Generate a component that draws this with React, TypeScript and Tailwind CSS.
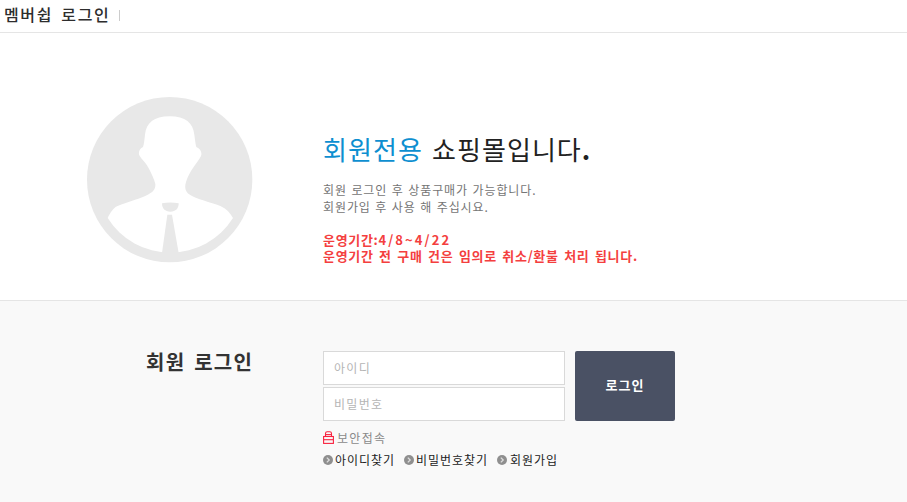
const font = { fontFamily: '"Noto Sans CJK KR", "Liberation Sans", sans-serif' };

function Avatar() {
  return (
    <svg width="166" height="166" viewBox="50 37 498 498" className="block shrink-0">
      <circle cx="298" cy="285" r="248" fill="#e8e8e8" />
      <path
        fill="#fff"
        d="M298 95 C250 95 228 115 224 150 C222 165 222 175 218 187 C208 192 202 203 208 214 C216 226 228 236 236 252 C244 268 252 285 255 298 C256 312 250 320 236 328 C212 342 175 350 140 365 C128 371 120 385 112 400 A222 222 0 0 0 488 400 C480 385 468 372 450 364 C420 352 380 345 355 328 C345 320 342 308 347 292 C352 276 360 262 368 250 C376 238 386 226 392 214 C396 203 390 192 378 187 C375 175 374 165 372 150 C368 115 346 95 298 95 Z"
      />
      <path fill="#e8e8e8" d="M275 356 Q300 351 325 356 C325 372 316 381 300 381 C284 381 275 372 275 356 Z" />
      <path fill="#e8e8e8" d="M291 390 L305 390 L325 505 L275 505 Z" />
    </svg>
  );
}

function Bullet() {
  return (
    <svg width="10" height="10" viewBox="0 0 10 10" className="shrink-0">
      <circle cx="5" cy="5" r="5" fill="#8f8f8f" />
      <path d="M3.8 2.6 L6.2 5 L3.8 7.4" fill="none" stroke="#dddddd" strokeWidth="1.3" />
    </svg>
  );
}

function Lock() {
  return (
    <svg width="11" height="13" viewBox="0 0 11 13" className="shrink-0 -mt-[2px]">
      <path d="M2.5 5 V2.5 Q2.5 .7 4.2 .7 H6.8 Q8.5 .7 8.5 2.5 V5" fill="none" stroke="#f8223f" strokeWidth="1.1" />
      <rect x=".6" y="5.5" width="9.8" height="6.9" fill="none" stroke="#f8223f" strokeWidth="1.1" />
      <path d="M1 8.7 H10" stroke="#f8223f" strokeWidth="1.1" />
      <path d="M2.5 3.6 H8.5" stroke="#f8223f" strokeWidth="1.1" />
    </svg>
  );
}

export default function App() {
  return (
    <div className="w-[907px] h-[502px] overflow-hidden bg-white tracking-[0.08em] [word-spacing:0.12em]" style={font}>
      <header className="h-[33px] border-b border-[#e5e5e5] flex items-center pl-1">
        <h1 className="text-[16px] leading-[28px] font-medium text-[#2d2d2d] -mt-[4px] tracking-[0.1em] [word-spacing:0.2em]">멤버쉽 로그인</h1>
        <span className="ml-[9px] w-px h-[11px] bg-[#cccccc] -mt-[2px]" />
      </header>

      <section className="h-[268px] border-b border-[#e5e5e5] flex">
        <div className="pl-[87px] pt-[64px]">
          <Avatar />
        </div>
        <div className="pl-[70px] pt-[96px]">
          <p className="text-[26px] leading-[40px] text-[#222222] tracking-[0.04em] [word-spacing:0.09em]">
            <span className="text-[#0e8fd0]">회원전용</span> 쇼핑몰입니다<span className="font-bold">.</span>
          </p>
          <p className="mt-[13px] text-[12px] leading-[16.5px] text-[#757575] tracking-[0.075em] [word-spacing:0.08em]">
            회원 로그인 후 상품구매가 가능합니다.
            <br />
            회원가입 후 사용 해 주십시요.
          </p>
          <p className="mt-[17px] text-[13px] leading-[16px] font-bold text-[#f43f3f] tracking-[0.052em]">
            운영기간:<span className="tracking-[0.16em]">4/8~4/22</span>
            <br />
            운영기간 전 구매 건은 임의로 취소/환불 처리 됩니다.
          </p>
        </div>
      </section>

      <section className="h-[201px] bg-[#f9f9f9] flex pt-[50px]">
        <h2 className="pl-[146px] w-[323px] shrink-0 text-[20px] leading-[22px] font-bold text-[#333333] [word-spacing:0.15em]">회원 로그인</h2>
        <div>
          <div className="flex gap-[10px]">
            <div className="flex flex-col gap-[2px]">
              <input
                readOnly
                placeholder="아이디"
                className="w-[242px] h-[34px] bg-white border border-[#d9d9d9] px-[10px] pb-[2px] text-[12px] outline-none placeholder:text-[#b5b5b5]"
              />
              <input
                readOnly
                placeholder="비밀번호"
                className="w-[242px] h-[34px] bg-white border border-[#d9d9d9] px-[10px] pb-[2px] text-[12px] outline-none placeholder:text-[#b5b5b5]"
              />
            </div>
            <button className="w-[100px] h-[70px] rounded-[2px] bg-[#4a5164] pb-[2px] text-white text-[13px] font-bold tracking-[0.08em]">로그인</button>
          </div>
          <div className="mt-[9px] flex items-center gap-[3px] text-[12px] leading-[16px] text-[#8a8a8a]">
            <Lock />
            <span>보안접속</span>
          </div>
          <div className="mt-[6px] flex items-center text-[12px] leading-[16px] text-[#222222] tracking-[0.08em]">
            <span className="flex items-center gap-[2px]">
              <Bullet />
              아이디찾기
            </span>
            <span className="flex items-center gap-[2px] ml-[9px]">
              <Bullet />
              비밀번호찾기
            </span>
            <span className="flex items-center gap-[3px] ml-[9px]">
              <Bullet />
              회원가입
            </span>
          </div>
        </div>
      </section>
    </div>
  );
}
